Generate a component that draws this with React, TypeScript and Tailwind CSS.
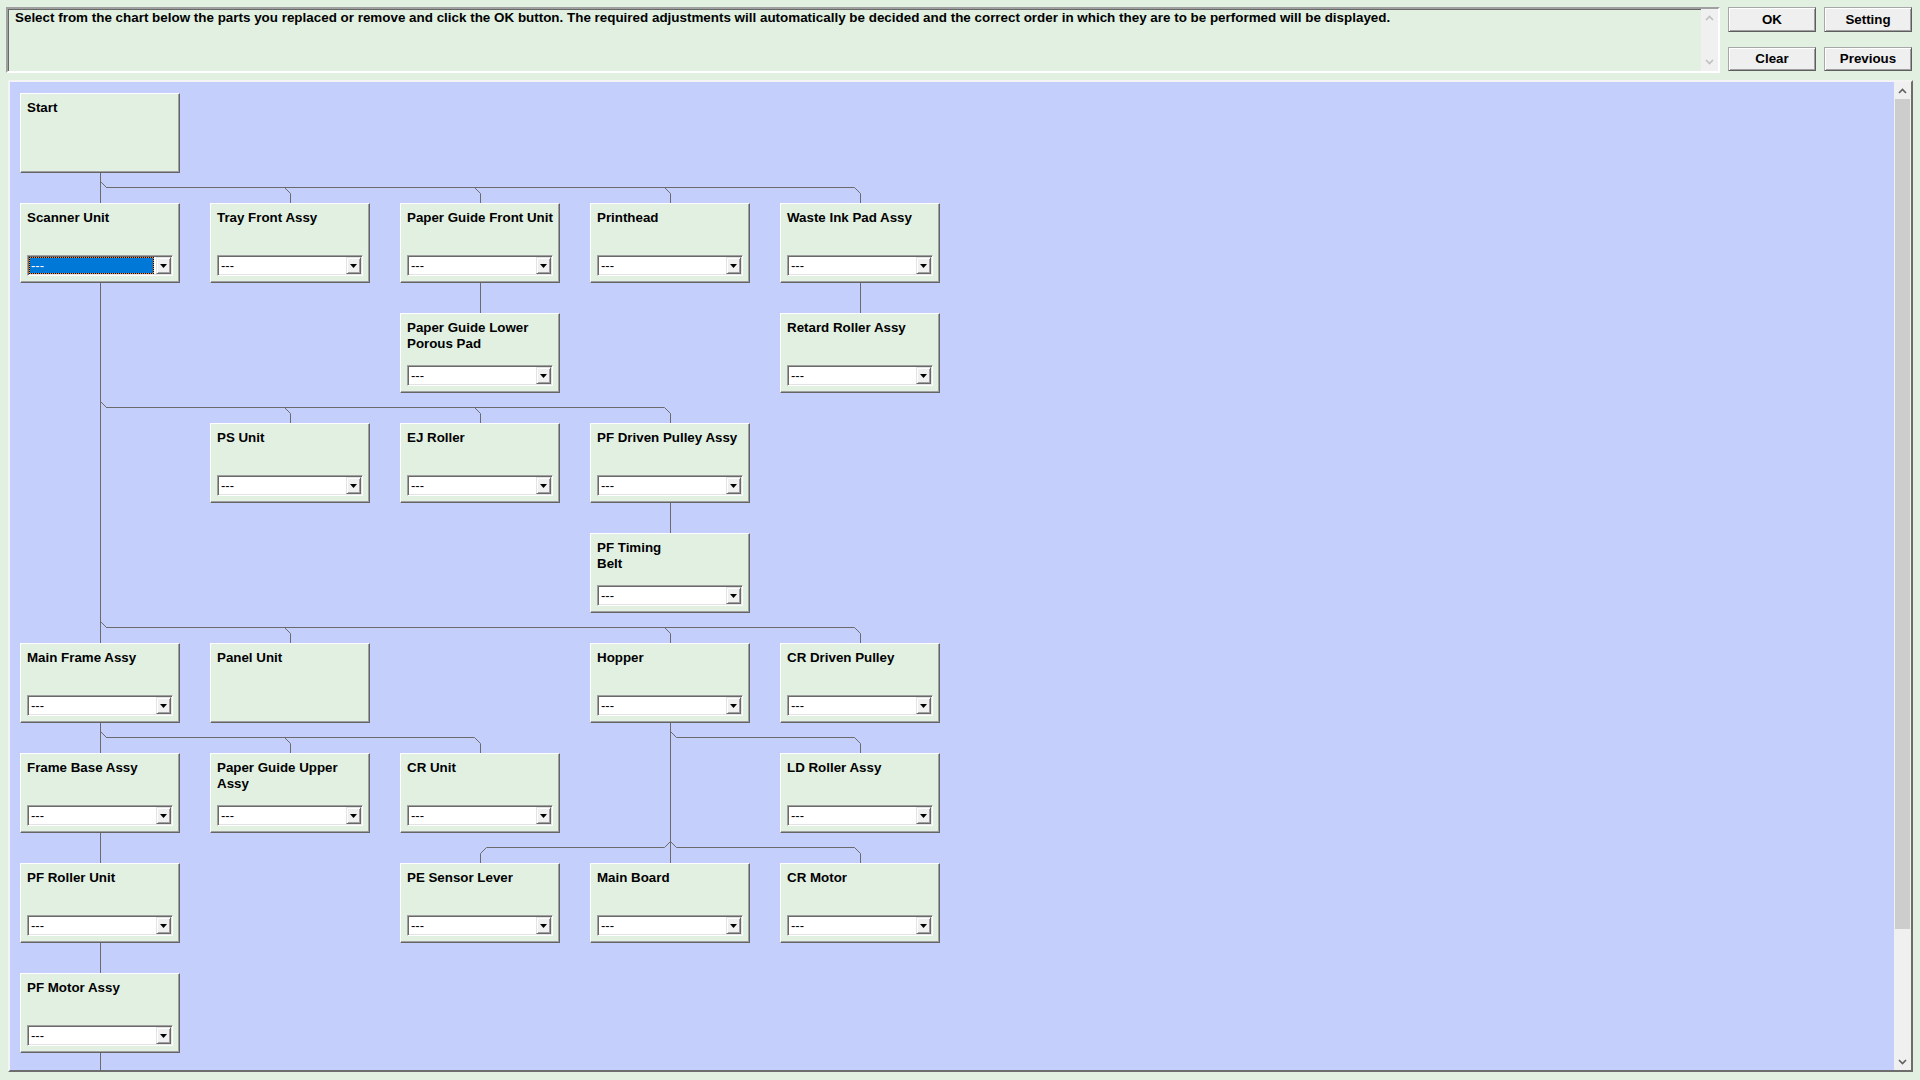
import React from "react";

type Part = {
  label: string;
  col: number;
  row: number;
  combo?: boolean;
  focused?: boolean;
};

const parts: Part[] = [
  { label: "Start", col: 0, row: 0, combo: false },
  { label: "Scanner Unit", col: 0, row: 1, focused: true },
  { label: "Tray Front Assy", col: 1, row: 1 },
  { label: "Paper Guide Front Unit", col: 2, row: 1 },
  { label: "Printhead", col: 3, row: 1 },
  { label: "Waste Ink Pad Assy", col: 4, row: 1 },
  { label: "Paper Guide Lower Porous Pad", col: 2, row: 2 },
  { label: "Retard Roller Assy", col: 4, row: 2 },
  { label: "PS Unit", col: 1, row: 3 },
  { label: "EJ Roller", col: 2, row: 3 },
  { label: "PF Driven Pulley Assy", col: 3, row: 3 },
  { label: "PF Timing\nBelt", col: 3, row: 4 },
  { label: "Main Frame Assy", col: 0, row: 5 },
  { label: "Panel Unit", col: 1, row: 5, combo: false },
  { label: "Hopper", col: 3, row: 5 },
  { label: "CR Driven Pulley", col: 4, row: 5 },
  { label: "Frame Base Assy", col: 0, row: 6 },
  { label: "Paper Guide Upper Assy", col: 1, row: 6 },
  { label: "CR Unit", col: 2, row: 6 },
  { label: "LD Roller Assy", col: 4, row: 6 },
  { label: "PF Roller Unit", col: 0, row: 7 },
  { label: "PE Sensor Lever", col: 2, row: 7 },
  { label: "Main Board", col: 3, row: 7 },
  { label: "CR Motor", col: 4, row: 7 },
  { label: "PF Motor Assy", col: 0, row: 8 },
];

const colClass = ["col-start-1", "col-start-2", "col-start-3", "col-start-4", "col-start-5"];
const rowClass = [
  "row-start-1",
  "row-start-2",
  "row-start-3",
  "row-start-4",
  "row-start-5",
  "row-start-6",
  "row-start-7",
  "row-start-8",
  "row-start-9",
];

// column centres and row tops of the chart grid (160px cells, 30px gutters)
const cx = (c: number) => 80 + 190 * c;
const top = (r: number) => 110 * r;
const bottom = (r: number) => 110 * r + 80;

// vertical trunks: [x, y1, y2]
const trunks: [number, number, number][] = [
  [cx(0), bottom(0), top(1)],
  [cx(0), bottom(1), top(5)],
  [cx(0), bottom(5), top(6)],
  [cx(0), bottom(6), top(7)],
  [cx(0), bottom(7), top(8)],
  [cx(0), bottom(8), bottom(8) + 60],
  [cx(2), bottom(1), top(2)],
  [cx(4), bottom(1), top(2)],
  [cx(3), bottom(3), top(4)],
  [cx(3), bottom(5), top(7)],
];

// branches: parent x, child row, child columns
const branches: { px: number; row: number; cols: number[] }[] = [
  { px: cx(0), row: 1, cols: [1, 2, 3, 4] },
  { px: cx(0), row: 3, cols: [1, 2, 3] },
  { px: cx(0), row: 5, cols: [1, 3, 4] },
  { px: cx(0), row: 6, cols: [1, 2] },
  { px: cx(3), row: 6, cols: [4] },
  { px: cx(3), row: 7, cols: [2, 4] },
];

function branchPaths() {
  const d: string[] = [];
  branches.forEach((b) => {
    const h = top(b.row) - 16;
    b.cols.forEach((c) => {
      const x = cx(c);
      const s = x > b.px ? 1 : -1;
      d.push(
        `M${b.px + 0.5} ${h - 6 + 0.5} L${b.px + 6 * s + 0.5} ${h + 0.5} L${x - 6 * s + 0.5} ${h + 0.5} L${x + 0.5} ${h + 6 + 0.5} L${x + 0.5} ${top(b.row)}`
      );
    });
  });
  trunks.forEach(([x, y1, y2]) => d.push(`M${x + 0.5} ${y1} L${x + 0.5} ${y2}`));
  return d.join(" ");
}

function Triangle() {
  return (
    <svg width="7" height="4" viewBox="0 0 7 4">
      <polygon points="0,0 7,0 3.5,4" fill="#000" />
    </svg>
  );
}

function Chevron({ up, color }: { up: boolean; color: string }) {
  return (
    <svg width="9" height="6" viewBox="0 0 9 6">
      <path
        d={up ? "M1 5 L4.5 1.5 L8 5" : "M1 1 L4.5 4.5 L8 1"}
        fill="none"
        stroke={color}
        strokeWidth="1.6"
      />
    </svg>
  );
}

function Combo({ focused }: { focused?: boolean }) {
  return (
    <div className="mt-auto flex h-[21px] w-full border border-t-[#a0a0a0] border-l-[#a0a0a0] border-r-white border-b-white bg-white p-[1px] shadow-[inset_1px_1px_0_#696969,inset_-1px_-1px_0_#e3e3e3]">
      <div className="mr-[2px] flex flex-1">
        {focused ? (
          <div className="flex flex-1 items-center border border-[#ff8a1f] bg-[#0078d7] pl-[1px] text-[13px] leading-[15px] text-white outline-1 -outline-offset-1 outline-dotted outline-black">
            ---
          </div>
        ) : (
          <div className="flex flex-1 items-center pl-[2px] text-[13px] leading-[15px] text-black">---</div>
        )}
      </div>
      <div className="flex w-[15px] items-center justify-center border border-t-[#e3e3e3] border-l-[#e3e3e3] border-r-[#696969] border-b-[#696969] bg-[#f0f0f0] pt-[1px] shadow-[inset_1px_1px_0_#ffffff,inset_-1px_-1px_0_#a0a0a0]">
        <Triangle />
      </div>
    </div>
  );
}

function Node({ part }: { part: Part }) {
  return (
    <div
      className={`${colClass[part.col]} ${rowClass[part.row]} relative flex flex-col border border-t-white border-l-white border-r-[#646464] border-b-[#646464] bg-[#e1f0e1] px-[6px] pt-[6px] pb-[6px] shadow-[inset_-1px_-1px_0_#a0a0a0]`}
    >
      <div className="whitespace-pre-line text-[13.33px] font-bold leading-[16px] text-black">{part.label}</div>
      {part.combo !== false && <Combo focused={part.focused} />}
    </div>
  );
}

function Button({ label, h }: { label: string; h: string }) {
  return (
    <div
      className={`${h} flex items-center justify-center border border-t-[#a8a8a8] border-l-[#a8a8a8] border-r-[#5e5e5e] border-b-[#5e5e5e] bg-[#efefef] text-[13.33px] font-bold text-black shadow-[inset_1px_1px_0_#ffffff,inset_-1px_-1px_0_#a0a0a0]`}
    >
      {label}
    </div>
  );
}

export default function App() {
  return (
    <div className="relative h-[1080px] w-[1920px] overflow-hidden bg-[#e1f0e1] font-['Liberation_Sans',Arial,sans-serif] text-black">
      {/* instructions and command buttons */}
      <div className="flex h-[80px] items-start">
        <div className="ml-[6px] mt-[7px] flex h-[66px] w-[1714px] border-2 border-t-[#a0a0a0] border-l-[#a0a0a0] border-r-white border-b-white bg-[#e1f0e1] shadow-[inset_1px_1px_0_#696969]">
          <div className="flex-1 pl-[7px] pt-[1px] text-[13.42px] font-bold leading-[16px]">
            Select from the chart below the parts you replaced or remove and click the OK button. The required
            adjustments will automatically be decided and the correct order in which they are to be performed will be
            displayed.
          </div>
          <div className="flex w-[17px] flex-col items-center justify-between bg-[#f0f0f0] py-[6px]">
            <Chevron up color="#bfbfbf" />
            <Chevron up={false} color="#bfbfbf" />
          </div>
        </div>
        <div className="ml-[8px] mt-[7px] grid grid-cols-[88px_88px] gap-x-[8px] gap-y-[15px]">
          <Button label="OK" h="h-[25px]" />
          <Button label="Setting" h="h-[25px]" />
          <Button label="Clear" h="h-[24px]" />
          <Button label="Previous" h="h-[24px]" />
        </div>
      </div>

      {/* parts chart */}
      <div className="ml-[8px] flex h-[992px] w-[1905px] border-2 border-t-[#f4f4f4] border-l-[#f4f4f4] border-r-[#6d6d6d] border-b-[#6d6d6d]">
        <div className="relative flex-1 overflow-hidden bg-[#c5cffb]">
          <div className="relative ml-[10px] mt-[11px] grid w-[920px] grid-cols-[repeat(5,160px)] grid-rows-[repeat(9,80px)] gap-x-[30px] gap-y-[30px]">
            <svg className="pointer-events-none absolute left-0 top-0 overflow-visible" width="920" height="1000">
              <path d={branchPaths()} fill="none" stroke="#6b6b6b" strokeWidth="1" />
            </svg>
            {parts.map((p) => (
              <Node key={p.label} part={p} />
            ))}
          </div>
        </div>
        <div className="flex w-[17px] flex-col bg-[#f0f0f0]">
          <div className="flex h-[17px] items-center justify-center">
            <Chevron up color="#606060" />
          </div>
          <div className="mx-[1px] h-[830px] bg-[#cdcdcd]" />
          <div className="flex-1" />
          <div className="flex h-[17px] items-center justify-center">
            <Chevron up={false} color="#606060" />
          </div>
        </div>
      </div>
    </div>
  );
}
